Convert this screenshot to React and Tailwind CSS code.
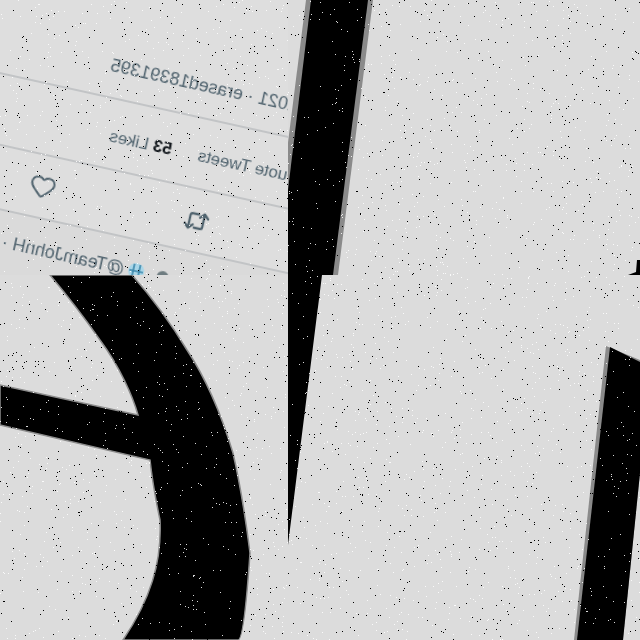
import React from "react";
import { Heart } from "lucide-react";

function specks(count, seed) {
  let s = seed >>> 0;
  const next = () => {
    s = (Math.imul(s, 1664525) + 1013904223) >>> 0;
    return s / 4294967296;
  };
  let d = "";
  for (let i = 0; i < count; i++) {
    const x = Math.floor(next() * 640);
    const y = Math.floor(next() * 640);
    d += `M${x} ${y}h1v1h-1z`;
  }
  return d;
}

const blackDots = specks(2300, 12345);
const whiteDots = specks(2600, 98765);

function Shape({ w, h, children }) {
  return (
    <svg className="block" width={w} height={h} viewBox={`0 0 ${w} ${h}`}>
      {children}
    </svg>
  );
}

const GLYPH =
  "M50 275 L132 275 C147 292 167 317 187 350 C207 380 223 420 233 453 C243 497 250 553 250 553 C247 597 243 640 238 640 L123 640 C150 600 162 563 160 520 C153 487 150 460 150 460 L0 425 L0 385 L138 415 C133 397 120 367 100 340 C77 307 50 275 50 275 Z";

export default function App() {
  return (
    <div className="relative grid grid-cols-[288px_352px] grid-rows-[275px_365px] w-[640px] h-[640px] overflow-hidden bg-[#dcdcdc] font-['Liberation_Sans',Arial,sans-serif]">
      <div className="relative overflow-hidden bg-[#dedede]">
        <div className="absolute left-[332px] top-[76px] w-[430px] pl-[30px] origin-top-left [transform:rotate(12.5deg)_scaleX(-1)] text-[#51646f] blur-[0.5px]">
          <div className="-ml-[30px] pl-[30px] h-[70px] pt-[6px] flex items-center text-[18px] border-b-2 border-[#c2c4c6]">
            <span className="-ml-[3px] whitespace-nowrap">2021 · erased18391395</span>
          </div>
          <div className="-ml-[30px] pl-[30px] h-[70px] pt-[6px] flex items-center gap-[27px] text-[17px] border-b-2 border-[#c2c4c6]">
            <span className="-ml-[21px] whitespace-nowrap">Quote Tweets</span>
            <span className="whitespace-nowrap">
              <b className="text-[#0f1419]">53</b> Likes
            </span>
          </div>
          <div className="-ml-[30px] pl-[30px] h-[63px] flex items-center border-b-2 border-[#c2c4c6]">
            <svg width="28" height="28" viewBox="0 0 24 24" fill="none" stroke="currentColor" strokeWidth="2" strokeLinecap="round" strokeLinejoin="round" className="ml-[57px] shrink-0">
              <path d="m2.5 8.5 3.5-3.5 3.5 3.5" />
              <path d="M6 6v10a2 2 0 0 0 2 2h5" />
              <path d="m21.5 15.5-3.5 3.5-3.5-3.5" />
              <path d="M18 18V8a2 2 0 0 0-2-2h-5" />
            </svg>
            <Heart size={27} strokeWidth={1.8} className="ml-[130px]" />
          </div>
          <div className="-ml-[30px] pl-[30px] h-[70px] pt-[18px] text-[18px] bg-[#dadada]">
            <div className="flex items-center h-[24px]">
              <svg width="14" height="14" viewBox="0 0 14 14" className="ml-[85px] shrink-0">
                <circle cx="7" cy="7" r="6" fill="#6e7c80" />
              </svg>
              <svg width="18" height="18" viewBox="0 0 18 18" className="ml-[11px] shrink-0">
                <circle cx="9" cy="9" r="8" fill="#a9d6e8" />
                <path d="M6 2v14M12 2v14M2 9h14" stroke="#3b87ab" strokeWidth="1.6" fill="none" />
              </svg>
              <span className="ml-[3px] whitespace-nowrap">@TeamJohnH</span>
              <span className="ml-[5px]">·</span>
            </div>
          </div>
        </div>
      </div>

      <div className="overflow-hidden">
        <Shape w={352} h={275}>
          <polygon points="18,0 -6,190 -6,275 50,275 85,0" fill="#8a8a8a" />
          <polygon points="23,0 0,190 0,275 45,275 80,0" fill="#000" />
          <polygon points="349,260 352,260 352,275 340,275 348,272" fill="#000" />
        </Shape>
      </div>

      <div className="overflow-hidden">
        <Shape w={288} h={365}>
          <path d={GLYPH} transform="translate(0 -275)" fill="#000" stroke="#8c8c8c" strokeWidth="1.5" />
        </Shape>
      </div>

      <div className="overflow-hidden">
        <Shape w={352} h={365}>
          <polygon points="0,0 34,0 0,270" fill="#000" />
          <polygon points="318,71 352,85 352,198 335,365 286,365" fill="#8a8a8a" />
          <polygon points="322,72 352,87 352,198 335,365 289,365" fill="#000" />
        </Shape>
      </div>

      <svg className="absolute left-0 top-0 pointer-events-none" width="640" height="640" viewBox="0 0 640 640" shapeRendering="crispEdges">
        <path d={whiteDots} fill="#ffffff" fillOpacity="0.85" />
        <path d={blackDots} fill="#000000" />
      </svg>
    </div>
  );
}
